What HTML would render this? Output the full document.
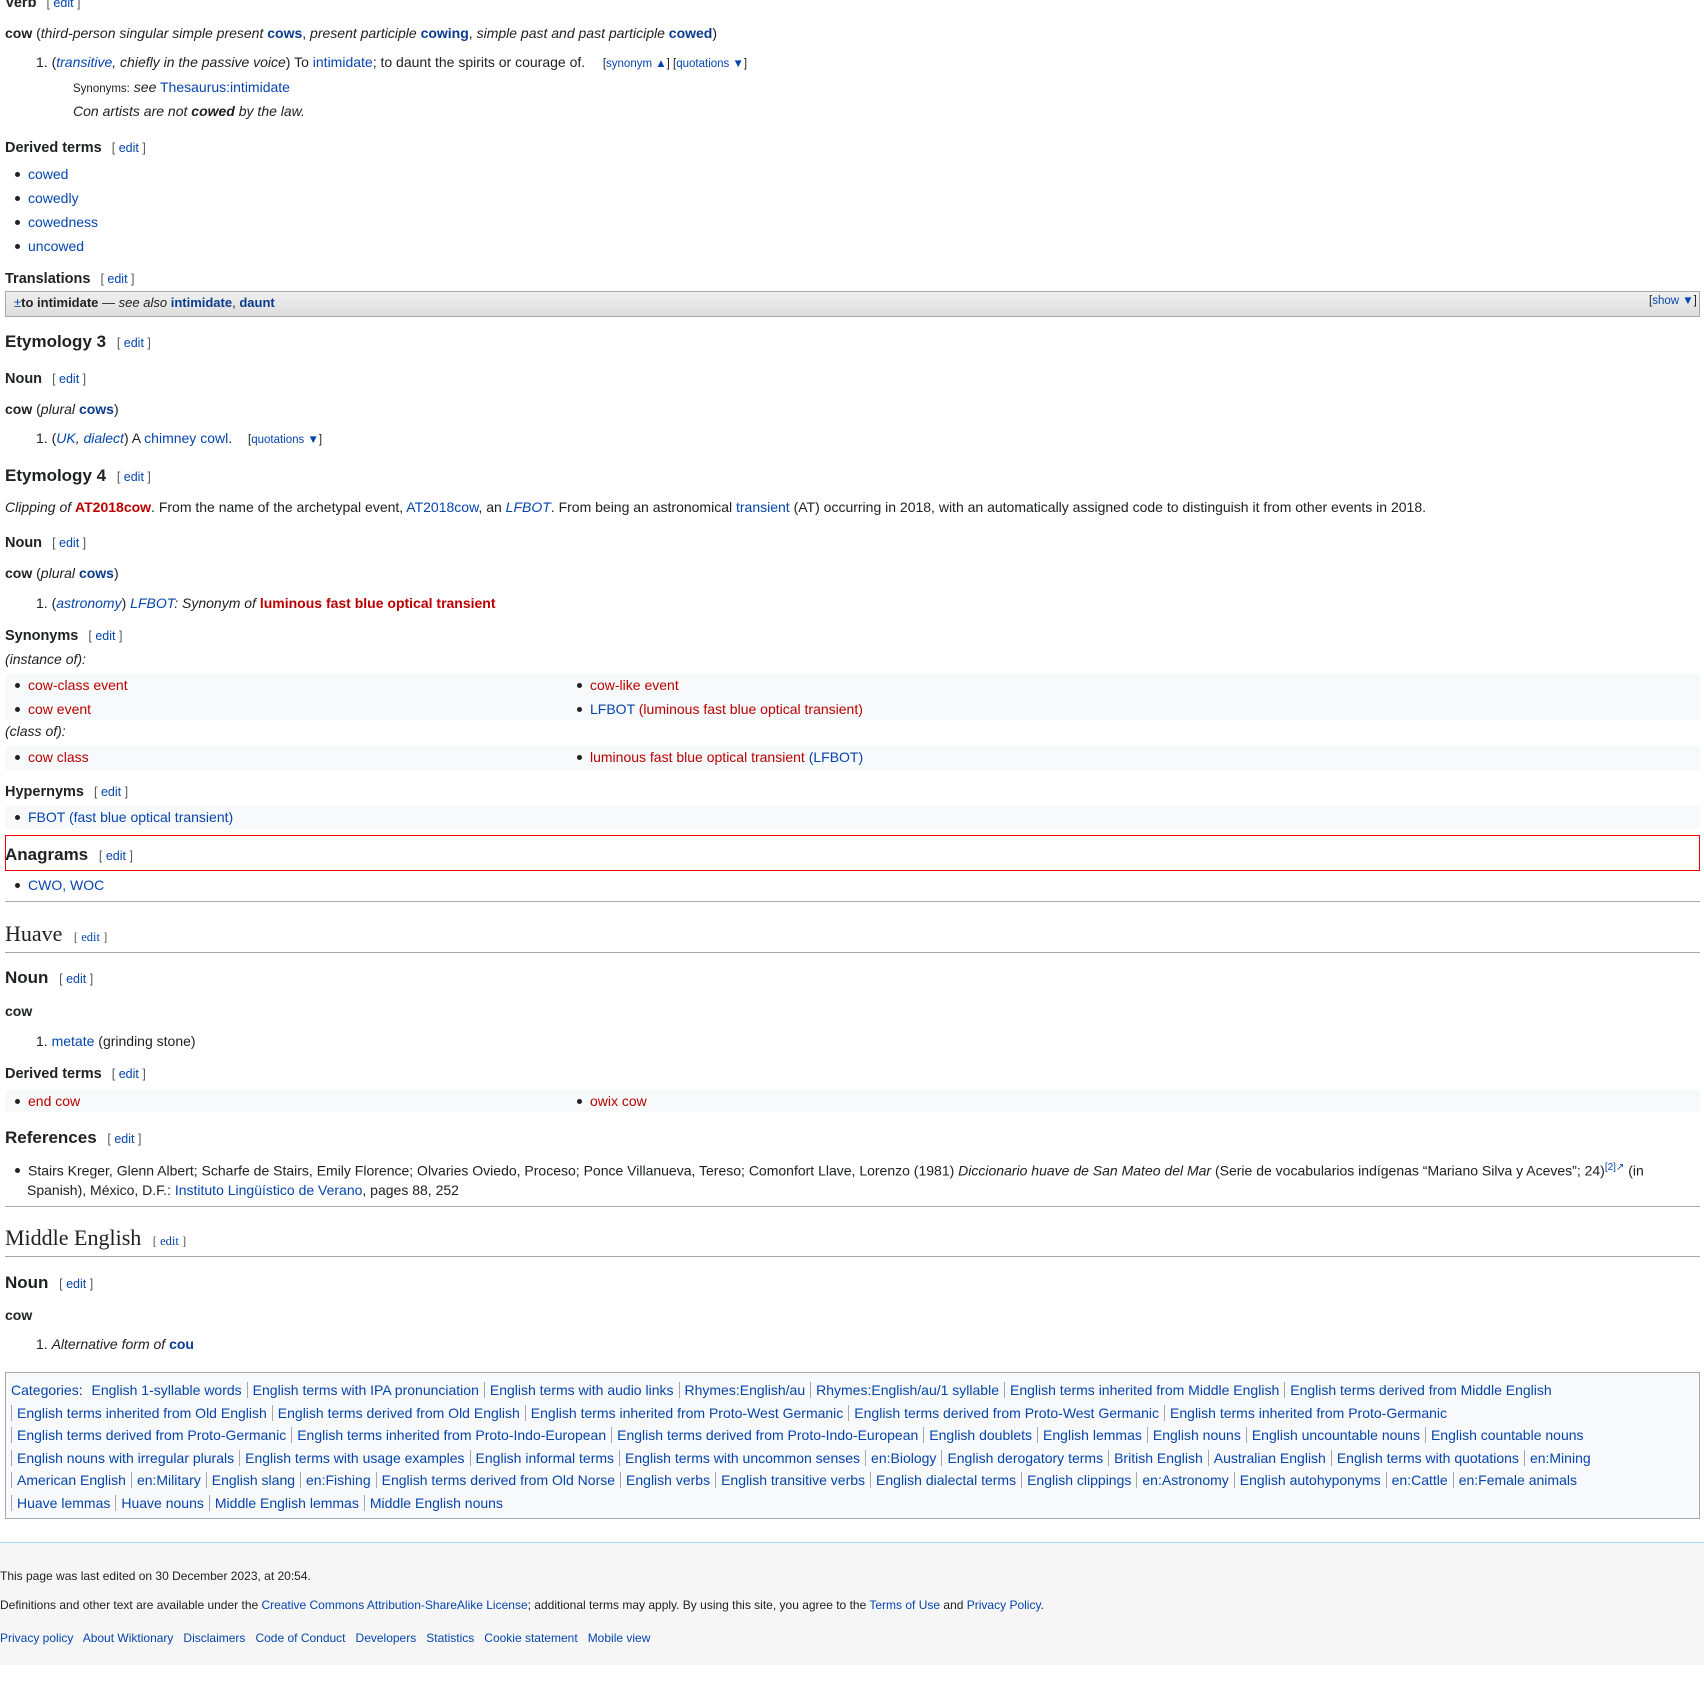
<!DOCTYPE html>
<html><head><meta charset="utf-8">
<style>
html,body{margin:0;padding:0;background:#fff;width:1704px;height:1704px;overflow:hidden;position:relative;font-family:"Liberation Sans",Arial,sans-serif;font-size:14px;color:#202122}
.l{position:absolute;left:5px;white-space:nowrap;line-height:20px}
a{color:#0645ad;text-decoration:none}
.r{color:#ba0000}
b a,a b{color:#0b3b8c}
.e{font-size:12.5px;font-weight:normal;color:#54595d;margin-left:6px}
.e a{color:#0645ad}
.h{font-weight:bold;font-size:14.5px}
.h3{font-weight:bold;font-size:17px}
.h2{font-family:"Liberation Serif",serif;font-size:22px}
.bu::before{content:"";display:inline-block;width:5px;height:5px;border-radius:50%;background:#202122;margin:0 8px 2px 15px;vertical-align:middle}
.n{left:36px}
.bg{position:absolute;left:5px;width:1695px;background:#f8f9fa}
.hr{position:absolute;left:5px;width:1695px;height:1px;background:#a2a9b1}
.sm{font-size:11.5px}
.cat a{margin:0 5px}
.sep{border-left:1px solid #a2a9b1}
.ft{position:absolute;left:0;font-size:12px;white-space:nowrap}
</style></head><body>
<div class="l h" style="top:-7px">Verb <span class="e">[ <a>edit</a> ]</span></div>
<div class="l" style="top:23px"><b>cow</b> (<i>third-person singular simple present</i> <b><a>cows</a></b>, <i>present participle</i> <b><a>cowing</a></b>, <i>simple past and past participle</i> <b><a>cowed</a></b>)</div>
<div class="l n" style="top:52px">1. (<i><a>transitive</a>, chiefly in the passive voice</i>) To <a>intimidate</a>; to daunt the spirits or courage of. &nbsp; <span class="sm" style="margin-left:6px">[<a>synonym ▲</a>] [<a>quotations ▼</a>]</span></div>
<div class="l" style="top:77px;left:73px"><span class="sm">Synonyms:</span> <i>see</i> <a>Thesaurus:intimidate</a></div>
<div class="l" style="top:101px;left:73px"><i>Con artists are not <b>cowed</b> by the law.</i></div>
<div class="l h" style="top:138px">Derived terms <span class="e">[ <a>edit</a> ]</span></div>
<div class="l bu" style="top:164px;left:0"><a>cowed</a></div>
<div class="l bu" style="top:188px;left:0"><a>cowedly</a></div>
<div class="l bu" style="top:212px;left:0"><a>cowedness</a></div>
<div class="l bu" style="top:236px;left:0"><a>uncowed</a></div>
<div class="l h" style="top:269px">Translations <span class="e">[ <a>edit</a> ]</span></div>
<div style="position:absolute;left:5px;top:291px;width:1693px;height:24px;border:1px solid #aaa;background:linear-gradient(#f0f0f0,#ddd)"></div>
<div class="l" style="top:293px;left:14px;font-size:13px"><a>±</a><b>to intimidate</b> — <i>see also</i> <b><a>intimidate</a></b>, <b><a>daunt</a></b></div>
<div class="l sm" style="top:291px;left:1649px">[<a>show ▼</a>]</div>
<div class="l h3" style="top:332px">Etymology 3 <span class="e">[ <a>edit</a> ]</span></div>
<div class="l h" style="top:369px">Noun <span class="e">[ <a>edit</a> ]</span></div>
<div class="l" style="top:399px"><b>cow</b> (<i>plural</i> <b><a>cows</a></b>)</div>
<div class="l n" style="top:428px">1. (<i><a>UK</a>, <a>dialect</a></i>) A <a>chimney</a> <a>cowl</a>. <span class="sm" style="margin-left:12px">[<a>quotations ▼</a>]</span></div>
<div class="l h3" style="top:466px">Etymology 4 <span class="e">[ <a>edit</a> ]</span></div>
<div class="l" style="top:497px"><i>Clipping of</i> <b class="r">AT2018cow</b>. From the name of the archetypal event, <a>AT2018cow</a>, an <i><a>LFBOT</a></i>. From being an astronomical <a>transient</a> (AT) occurring in 2018, with an automatically assigned code to distinguish it from other events in 2018.</div>
<div class="l h" style="top:533px">Noun <span class="e">[ <a>edit</a> ]</span></div>
<div class="l" style="top:563px"><b>cow</b> (<i>plural</i> <b><a>cows</a></b>)</div>
<div class="l n" style="top:593px">1. (<i><a>astronomy</a></i>) <i><a>LFBOT</a>: Synonym of</i> <b class="r">luminous fast blue optical transient</b></div>
<div class="l h" style="top:626px">Synonyms <span class="e">[ <a>edit</a> ]</span></div>
<div class="l" style="top:649px"><i>(instance of):</i></div>
<div class="bg" style="top:674px;height:46px"></div>
<div class="l bu" style="top:675px;left:0"><a class="r">cow-class event</a></div>
<div class="l bu" style="top:675px;left:562px"><a class="r">cow-like event</a></div>
<div class="l bu" style="top:699px;left:0"><a class="r">cow event</a></div>
<div class="l bu" style="top:699px;left:562px"><a>LFBOT</a> <a class="r">(luminous fast blue optical transient)</a></div>
<div class="l" style="top:721px"><i>(class of):</i></div>
<div class="bg" style="top:746px;height:24px"></div>
<div class="l bu" style="top:747px;left:0"><a class="r">cow class</a></div>
<div class="l bu" style="top:747px;left:562px"><a class="r">luminous fast blue optical transient</a> <a>(LFBOT)</a></div>
<div class="l h" style="top:782px">Hypernyms <span class="e">[ <a>edit</a> ]</span></div>
<div class="bg" style="top:806px;height:23px"></div>
<div class="l bu" style="top:807px;left:0"><a>FBOT (fast blue optical transient)</a></div>
<div style="position:absolute;left:5px;top:835px;width:1693px;height:34px;border:1px solid #e00"></div>
<div class="l h3" style="top:845px">Anagrams <span class="e">[ <a>edit</a> ]</span></div>
<div class="l bu" style="top:875px;left:0"><a>CWO, WOC</a></div>
<div class="hr" style="top:901px"></div>
<div class="l h2" style="top:924px">Huave <span class="e" style="margin-left:6px">[ <a>edit</a> ]</span></div>
<div class="hr" style="top:952px"></div>
<div class="l h3" style="top:968px">Noun <span class="e">[ <a>edit</a> ]</span></div>
<div class="l" style="top:1001px"><b>cow</b></div>
<div class="l n" style="top:1031px">1. <a>metate</a> (grinding stone)</div>
<div class="l h" style="top:1064px">Derived terms <span class="e">[ <a>edit</a> ]</span></div>
<div class="bg" style="top:1090px;height:22px"></div>
<div class="l bu" style="top:1091px;left:0"><a class="r">end cow</a></div>
<div class="l bu" style="top:1091px;left:562px"><a class="r">owix cow</a></div>
<div class="l h3" style="top:1128px">References <span class="e">[ <a>edit</a> ]</span></div>
<div class="l bu" style="top:1158px;left:0">Stairs Kreger, Glenn Albert; Scharfe de Stairs, Emily Florence; Olvaries Oviedo, Proceso; Ponce Villanueva, Tereso; Comonfort Llave, Lorenzo (1981) <i>Diccionario huave de San Mateo del Mar</i> (Serie de vocabularios indígenas “Mariano Silva y Aceves”; 24)<sup style="font-size:10px"><a>[2]↗</a></sup> (in</div>
<div class="l" style="top:1180px;left:27px">Spanish), México, D.F.: <a>Instituto Lingüístico de Verano</a>, pages 88, 252</div>
<div class="hr" style="top:1206px"></div>
<div class="l h2" style="top:1228px">Middle English <span class="e" style="margin-left:6px">[ <a>edit</a> ]</span></div>
<div class="hr" style="top:1256px"></div>
<div class="l h3" style="top:1273px">Noun <span class="e">[ <a>edit</a> ]</span></div>
<div class="l" style="top:1305px"><b>cow</b></div>
<div class="l n" style="top:1334px">1. <i>Alternative form of</i> <b><a>cou</a></b></div>
<div style="position:absolute;left:5px;top:1372px;width:1693px;height:145px;border:1px solid #a2a9b1;background:#f8f9fa"></div>
<div class="l cat" style="top:1379px;left:11px;line-height:22.5px;white-space:normal;width:1680px">
<a style="margin:0">Categories</a>: <a>English 1-syllable words</a><span class="sep"></span><a>English terms with IPA pronunciation</a><span class="sep"></span><a>English terms with audio links</a><span class="sep"></span><a>Rhymes:English/au</a><span class="sep"></span><a>Rhymes:English/au/1 syllable</a><span class="sep"></span><a>English terms inherited from Middle English</a><span class="sep"></span><a>English terms derived from Middle English</a><br>
<span class="sep"></span><a>English terms inherited from Old English</a><span class="sep"></span><a>English terms derived from Old English</a><span class="sep"></span><a>English terms inherited from Proto-West Germanic</a><span class="sep"></span><a>English terms derived from Proto-West Germanic</a><span class="sep"></span><a>English terms inherited from Proto-Germanic</a><br>
<span class="sep"></span><a>English terms derived from Proto-Germanic</a><span class="sep"></span><a>English terms inherited from Proto-Indo-European</a><span class="sep"></span><a>English terms derived from Proto-Indo-European</a><span class="sep"></span><a>English doublets</a><span class="sep"></span><a>English lemmas</a><span class="sep"></span><a>English nouns</a><span class="sep"></span><a>English uncountable nouns</a><span class="sep"></span><a>English countable nouns</a><br>
<span class="sep"></span><a>English nouns with irregular plurals</a><span class="sep"></span><a>English terms with usage examples</a><span class="sep"></span><a>English informal terms</a><span class="sep"></span><a>English terms with uncommon senses</a><span class="sep"></span><a>en:Biology</a><span class="sep"></span><a>English derogatory terms</a><span class="sep"></span><a>British English</a><span class="sep"></span><a>Australian English</a><span class="sep"></span><a>English terms with quotations</a><span class="sep"></span><a>en:Mining</a><br>
<span class="sep"></span><a>American English</a><span class="sep"></span><a>en:Military</a><span class="sep"></span><a>English slang</a><span class="sep"></span><a>en:Fishing</a><span class="sep"></span><a>English terms derived from Old Norse</a><span class="sep"></span><a>English verbs</a><span class="sep"></span><a>English transitive verbs</a><span class="sep"></span><a>English dialectal terms</a><span class="sep"></span><a>English clippings</a><span class="sep"></span><a>en:Astronomy</a><span class="sep"></span><a>English autohyponyms</a><span class="sep"></span><a>en:Cattle</a><span class="sep"></span><a>en:Female animals</a><br>
<span class="sep"></span><a>Huave lemmas</a><span class="sep"></span><a>Huave nouns</a><span class="sep"></span><a>Middle English lemmas</a><span class="sep"></span><a>Middle English nouns</a>
</div>
<div style="position:absolute;left:0;top:1542px;width:1704px;height:122px;background:#f6f6f6;border-top:1px solid #a7d7f9"></div>
<div class="ft" style="top:1569px">This page was last edited on 30 December 2023, at 20:54.</div>
<div class="ft" style="top:1598px">Definitions and other text are available under the <a>Creative Commons Attribution-ShareAlike License</a>; additional terms may apply. By using this site, you agree to the <a>Terms of Use</a> and <a>Privacy Policy</a>.</div>
<div class="ft" style="top:1631px"><a>Privacy policy</a> &nbsp; <a>About Wiktionary</a> &nbsp; <a>Disclaimers</a> &nbsp; <a>Code of Conduct</a> &nbsp; <a>Developers</a> &nbsp; <a>Statistics</a> &nbsp; <a>Cookie statement</a> &nbsp; <a>Mobile view</a></div>
</body></html>
